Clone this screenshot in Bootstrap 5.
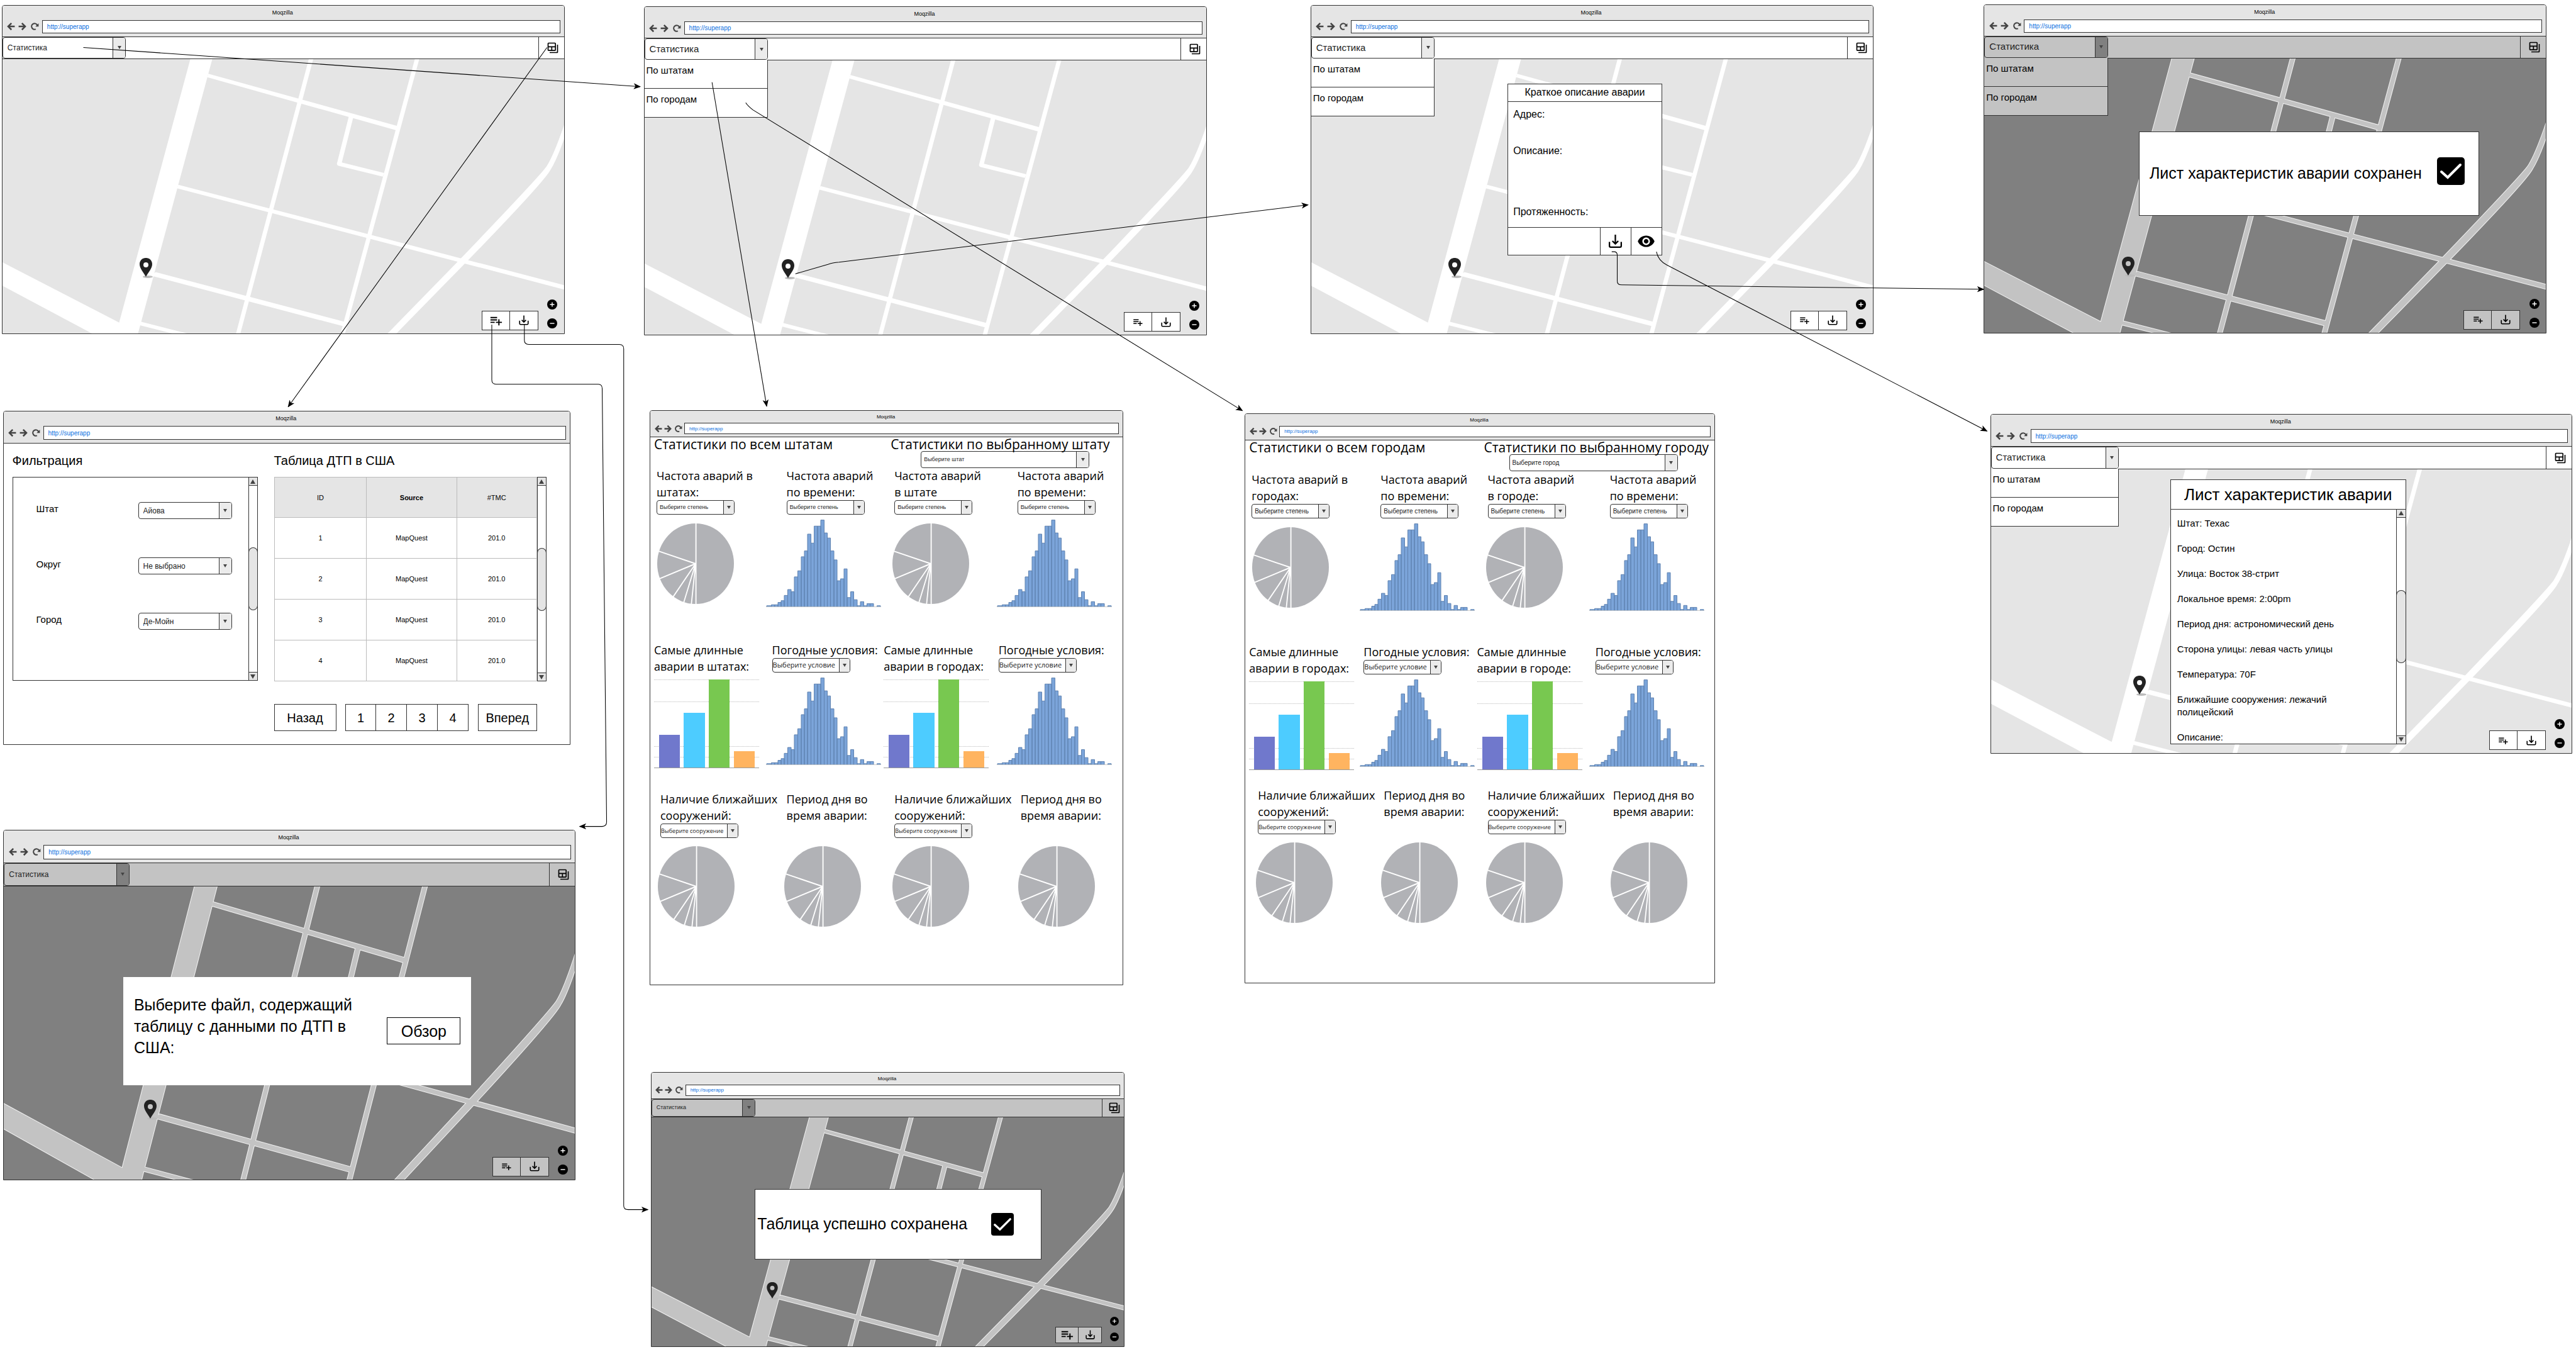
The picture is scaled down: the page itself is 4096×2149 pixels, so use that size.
<!DOCTYPE html>
<html lang="ru">
<head>
<meta charset="utf-8">
<meta name="viewport" content="width=device-width, initial-scale=1">
<title>Макеты: карта ДТП</title>
<link href="https://cdn.jsdelivr.net/npm/bootstrap@5.3.0/dist/css/bootstrap.min.css" rel="stylesheet">
<style>
  :root { --ink: #333; --pane: #e5e5e5; }
  body { font-family: "Liberation Sans", Arial, sans-serif; color: #000; background: #fff; overflow: hidden; }
  .board { position: relative; width: 100%; aspect-ratio: 4096 / 2149; }
  .flow-lines { position: absolute; inset: 0; width: 100%; height: 100%; pointer-events: none; z-index: 20; }
  .flow-lines path { fill: none; stroke: #000; stroke-width: 1.2; }
  .flow-lines .tip { fill: #000; stroke: none; }

  /* Browser windows on the board */
  .win { position: absolute; background: #fff; border: 1px solid var(--ink); border-radius: 4px 4px 0 0;
         --title-h: 23px; --bar-h: 21px; --nav-w: 19px; --nav-g: 14px; --pad-b: 5px; --title-f: 9px; --url-f: 10px;
         --tool-h: 35px; --tool-f: 15px; --hit: 16px; --ctl-w: 45px; --ctl-h: 31px; --ctl-i: 18px; --ctl-r: 41px; --ctl-g: 14px; }
  .win-tall { --bar-h: 22px; --tool-h: 36px; }
  .win-small { --title-h: 19px; --bar-h: 18px; --nav-w: 16px; --nav-g: 13px; --pad-b: 4px; --title-f: 8px; --url-f: 8px;
               --tool-h: 29px; --tool-f: 9px; --hit: 14px; --ctl-w: 37px; --ctl-h: 26px; --ctl-i: 17px; --ctl-r: 35px; --ctl-g: 11px; }
  .w-home   { left: .07%;  top: .37%;  width: 21.85%; --tool-f: 12px; }
  .w-menu   { left: 24.99%; top: .47%; width: 21.85%; }
  .w-brief  { left: 50.87%; top: .37%; width: 21.85%; }
  .w-saved  { left: 77.01%; top: .31%; width: 21.85%; }
  .w-filter { left: .11%;  top: 30.4%; width: 22.03%; }
  .w-states { left: 25.22%; top: 30.35%; width: 18.39%; --pf: 9px; --r0: 48px; --r1: 277px; --r2: 237px; --pb: 92px; --pick-in: 48px; }
  .w-cities { left: 48.32%; top: 30.57%; width: 18.25%; --pf: 10px; --r0: 49px; --r1: 274px; --r2: 228px; --pb: 95px; --pick-in: 40px; }
  .w-sheet  { left: 77.26%; top: 30.62%; width: 22.59%; --map: 925 / 452; }
  .w-upload { left: .13%;  top: 61.37%; width: 22.2%; --tool-f: 12px; --tool-h: 37px; --map: 909 / 467; --bar-h: 23px; }
  .w-done   { left: 25.26%; top: 79.27%; width: 18.4%; --map: 753 / 365; }

  .chrome { background: var(--pane); border-bottom: 1px solid var(--ink); border-radius: 3px 3px 0 0; padding: 0 6px var(--pad-b) 4px; }
  .win-title { font-size: var(--title-f); line-height: var(--title-h); text-align: center; }
  .nav-btn { border: 0; background: none; padding: 0; width: var(--nav-w); height: var(--bar-h); display: flex; align-items: center; justify-content: center; }
  .nav-btn svg { width: var(--nav-g); height: var(--nav-g); fill: #444; }
  .url-box { flex: 1; min-width: 0; height: var(--bar-h); border: 1px solid var(--ink); background: #fff; color: #0a6fe0; font-size: var(--url-f); padding: 0 7px; margin-left: 2px; border-radius: 0; }

  .tools { height: var(--tool-h); background: #fff; border-bottom: 1px solid var(--ink); position: relative; z-index: 2; }
  .tables-btn { width: var(--ctl-r); border: 0; border-left: 1px solid var(--ink); background: none; padding: 0 0 0 4px; display: flex; align-items: center; justify-content: center; }
  .tables-btn svg { width: 20px; height: 20px; }
  .pick { display: flex; border: 1px solid var(--ink); border-radius: 4px; background: #fff; overflow: hidden; }
  .pick select { appearance: none; border: 0; background: none; flex: 1; min-width: 0; padding: 0 0 0 7px; color: #222; font-size: inherit; }
  .pick-arrow { width: 20px; background: #ebebeb; border-left: 1px solid var(--ink); display: flex; align-items: center; justify-content: center; }
  .pick-arrow::before { content: ""; border: 3px solid transparent; border-top: 5px solid #444; border-bottom: 0; }
  .tools .pick { width: 22%; font-size: var(--tool-f); }
  .pick-menu { position: absolute; top: 100%; left: 0; width: 22%; font-size: 15px; }
  .pick-menu .list-group-item { height: 46px; padding: 7px 3px; line-height: 20px; color: #000; border: 1px solid var(--ink); border-top: 0; border-left: 0; background: #fff; }

  .city-map { position: relative; aspect-ratio: var(--map, 895 / 437); background: var(--pane); overflow: hidden; }
  .roads { position: absolute; inset: 0; width: 100%; height: 100%; fill: #fff; }
  .pin { position: absolute; left: 25.6%; top: 79.3%; width: 24px; height: 32px; transform: translate(-50%, -94%); }
  .win-small .pin { width: 21px; height: 28px; }
  .map-ctl { position: absolute; right: 0; bottom: 5px; display: flex; align-items: flex-end; }
  .ctl { width: var(--ctl-w); height: var(--ctl-h); border: 1px solid var(--ink); background: #fff; padding: 0; display: flex; align-items: center; justify-content: center; }
  .ctl + .ctl { border-left: 0; }
  .ctl svg { width: var(--ctl-i); height: var(--ctl-i); }
  .w-home .ctl:first-child svg, .w-done .ctl:first-child svg { width: 23px; height: 23px; }
  .zoomers { width: var(--ctl-r); display: flex; flex-direction: column; align-items: center; gap: var(--ctl-g); padding: 0 0 3px 4px; }
  .zoomers button { border: 0; background: none; padding: 0; line-height: 0; }
  .zoomers svg { width: var(--hit); height: var(--hit); display: block; }

  .dimmed .tools, .dimmed .tools .pick, .dimmed .pick-menu .list-group-item, .dimmed .ctl { background: #c3c3c3; }
  .dimmed .pick-arrow { background: #808080; }
  .dimmed .city-map { background: #808080; }
  .dimmed .roads { fill: #c3c3c3; }
  .dimmed .roads .edge { stroke: #f2f2f2; stroke-width: 2; }

  /* Boxes over the map */
  .sheet { position: absolute; background: #fff; border: 1px solid var(--ink); }
  .brief { left: 35%; top: 9%; width: 27.5%; font-size: 16px; }
  .brief-head { height: 28px; line-height: 26px; border-bottom: 1px solid var(--ink); text-align: center; }
  .brief-body { height: 200px; padding: 10px 8px 14px; line-height: 20px; border-bottom: 1px solid var(--ink); display: grid; grid-template-rows: 58px 97px 20px; }
  .brief-foot button { width: 49px; height: 43px; border: 0; border-left: 1px solid var(--ink); background: none; padding: 0; }
  .notice { left: 27.5%; top: 26.6%; width: 60.6%; height: 134px; padding: 0 22px 0 16px; font-size: 25px; white-space: nowrap; }
  .tick svg { width: 44px; height: 44px; display: block; }
  .done { left: 21.9%; top: 31.3%; height: 112px; padding: 0 43px 0 3px; }
  .done .tick svg { width: 36px; height: 36px; }
  .upload { left: 20.9%; top: 30.9%; width: 61%; height: 172px; padding: 0 17px; font-size: 25px; line-height: 34px; border: 0; }
  .upload-text { padding-bottom: 16px; }
  .upload button { width: 117px; height: 43px; border: 1px solid #000; background: #fff; padding: 0; font-size: 25px; line-height: 34px; }
  .traits { left: 30.9%; top: 3.5%; width: 40.6%; }
  .traits h2 { font-size: 26px; line-height: 46px; margin: 0; text-align: center; border-bottom: 1px solid var(--ink); }
  .traits-body { height: 372px; }
  .traits-list { padding: 12px 60px 0 10px; font-size: 15px; line-height: 20px; overflow: hidden; }
  .traits-list p { margin: 0 0 20px; }

  .sbar { width: 15px; flex: none; display: flex; flex-direction: column; border: 1px solid var(--ink); background: #fff; }
  .sbar b { height: 13px; background: var(--pane); display: flex; align-items: center; justify-content: center; }
  .sbar b::before { content: ""; border: 4px solid transparent; border-top: 0; border-bottom: 7px solid #444; }
  .sbar b:first-child { border-bottom: 1px solid var(--ink); }
  .sbar b:last-child { border-top: 1px solid var(--ink); }
  .sbar b:last-child::before { transform: rotate(180deg); }
  .sbar i { flex: 1; display: flex; align-items: center; }
  .sbar i::before { content: ""; width: 100%; height: 33%; background: var(--pane); border-radius: 8px; box-shadow: 0 0 0 1px var(--ink); }

  /* Filter window */
  .filter-page { display: grid; grid-template-columns: 390px 1fr; column-gap: 26px; padding: 14px 37px 21px 14px; }
  .filter-page h2 { font-size: 20px; line-height: 26px; margin: 0 0 13px; }
  .filter-box { height: 324px; border: 1px solid var(--ink); border-right: 0; }
  .filter-form { padding: 39px 26px 0 37px; display: flex; flex-direction: column; gap: 61px; font-size: 15px; line-height: 22px; }
  .filter-form .pick { width: 149px; height: 27px; font-size: 12px; }
  .filter-form label { line-height: 22px; }
  .data-grid { flex: 1; border-collapse: collapse; table-layout: fixed; font-size: 11px; text-align: center; }
  .data-grid th, .data-grid td { border: 1px solid #bbb; vertical-align: middle; padding: 0; height: 65px; }
  .data-grid th { background: var(--pane); font-weight: 400; height: 64px; }
  .data-grid th.sorted { font-weight: 700; }
  .pager { margin-top: 36px; padding-right: 15px; }
  .pager button { height: 43px; border: 1px solid var(--ink); background: #fff; font-size: 20px; padding: 0; color: #000; }
  .pager .side { width: 99px; }
  .pager .side:last-child { width: 94px; }
  .pager .num { width: 49px; }
  .pager .num + .num { border-left: 0; }

  /* Statistics windows */
  .stats { font-family: "Open Sans", "Noto Sans", sans-serif; display: grid; grid-template-columns: 184fr 185fr 183fr 201fr; grid-template-rows: var(--r0) var(--r1) var(--r2) auto; padding-bottom: var(--pb); }
  .stats > * { min-width: 0; }
  .stats h2 { font-size: 21px; line-height: 23px; margin: 0; white-space: nowrap; font-weight: 400; }
  .stats h3, .stats h3 label { font-size: 18px; line-height: 26px; margin: 0; white-space: nowrap; font-weight: 400; display: block; }
  .half { grid-column: span 2; padding-left: 6px; }
  .half + .half { padding-left: 14px; }
  .half .pick { width: 268px; height: 27px; margin: -1px 0 0 var(--pick-in); }
  .stats .pick { font-family: "Liberation Sans", Arial, sans-serif; font-size: var(--pf); }
  .cell .pick { width: 124px; height: 23px; }
  .cell .pick-arrow { width: 17px; }
  .stats .pick select { padding-left: 4px; }
  .stats .pick-wide { font-family: "Open Sans", "Noto Sans", sans-serif; font-size: 11px; }
  .stats .pick-wider { font-family: "Open Sans", "Noto Sans", sans-serif; font-size: 9px; }
  .stats .pick-wide select, .stats .pick-wider select { padding-left: 0; }
  .in-6 { padding-left: 6px; } .in-10 { padding-left: 10px; } .in-16 { padding-left: 16px; } .in-20 { padding-left: 20px; }
  .in-33 { padding-left: 33px; } .in-38 { padding-left: 38px; } .in-3 { padding-left: 3px; }
  .cell svg { display: block; }
  .cell .bell { width: 183px; height: 139px; margin-top: 8px; }
  .cell .cake { width: 122px; height: 128px; margin: 14px 0 0 1px; }
  .cell.in-20 .cake { margin-left: -3px; }
  .cell .bars { width: 167px; height: 141px; margin-top: 8px; }
  .cell .cake-end { margin: auto 0 0 -4px; }
  .cell.in-20 .cake-end { margin-top: auto; }
  .last-cell { display: flex; flex-direction: column; height: 216px; }
</style>
<script src="https://cdn.jsdelivr.net/npm/bootstrap@5.3.0/dist/js/bootstrap.bundle.min.js"></script>
</head>
<body>

<svg width="0" height="0" class="position-absolute" aria-hidden="true">
  <symbol id="g-back" viewBox="0 0 24 24"><path d="M12.5 1.5 15.6 4.6 10.3 9.800H23V14.200H10.300L15.600 19.400 12.500 22.500 2 12z"/></symbol>
  <symbol id="g-next" viewBox="0 0 24 24"><path d="M11.500 1.500 8.400 4.600 13.700 9.800H1V14.200H13.700L8.400 19.400 11.500 22.500 22 12z"/></symbol>
  <symbol id="g-reload" viewBox="0 0 24 24"><path d="M12 2a10 10 0 1 0 4 19.200l-1.500-3.400A6.300 6.300 0 1 1 17.500 9L14 12.500h9V3.500L20.200 6.300A10 10 0 0 0 12 2z"/></symbol>
  <symbol id="g-tables" viewBox="0 0 24 24"><path d="M20 6v14H6v2h14c1.100 0 2-.9 2-2V6h-2z"/><path d="M16 2H4c-1.100 0-2 .9-2 2v12c0 1.100.9 2 2 2h12c1.100 0 2-.9 2-2V4c0-1.100-.9-2-2-2zM9 16H4v-5h5v5zm7 0h-5v-5h5v5zm0-7H4V4h12v5z"/></symbol>
  <symbol id="g-listadd" viewBox="0 0 24 24"><path d="M14 10H3v2h11v-2zm0-4H3v2h11V6zm4 8v-4h-2v4h-4v2h4v4h2v-4h4v-2h-4zM3 16h7v-2H3v2z"/></symbol>
  <symbol id="g-save" viewBox="0 0 24 24"><path d="M3 13v6a2 2 0 0 0 2 2h14a2 2 0 0 0 2-2v-6M12 2v14M7.500 11.500 12 16l4.500-4.500" fill="none" stroke="#000" stroke-width="2.200"/></symbol>
  <symbol id="g-eye" viewBox="0 0 24 24"><path d="M12 4.500C7 4.500 2.730 7.610 1 12c1.730 4.390 6 7.500 11 7.500s9.270-3.110 11-7.500c-1.730-4.390-6-7.500-11-7.500zM12 17c-2.760 0-5-2.240-5-5s2.240-5 5-5 5 2.240 5 5-2.240 5-5 5zm0-8c-1.660 0-3 1.340-3 3s1.340 3 3 3 3-1.340 3-3-1.340-3-3-3z"/></symbol>
  <symbol id="g-plus" viewBox="0 0 18 18"><circle cx="9" cy="9" r="9"/><path d="M9 5v8M5 9h8" stroke="#fff" stroke-width="1.600"/></symbol>
  <symbol id="g-minus" viewBox="0 0 18 18"><circle cx="9" cy="9" r="9"/><path d="M5 9h8" stroke="#fff" stroke-width="1.600"/></symbol>
  <symbol id="g-check" viewBox="0 0 44 44"><rect width="44" height="44" rx="5"/><path d="M7 23 17 32 37 12" fill="none" stroke="#fff" stroke-width="4" stroke-linecap="round"/></symbol>
  <symbol id="g-pin" viewBox="0 0 24 32"><ellipse cx="15" cy="30" rx="8" ry="2" fill="#bbb"/><path d="M12 0C6 0 2 4.500 2 10c0 7 6.500 13 10 20 3.500-7 10-13 10-20C22 4.500 18 0 12 0zm0 7a4 4 0 1 1 0 8 4 4 0 0 1 0-8z" fill="#222"/></symbol>
  <g id="roads">
    <path vector-effect="non-scaling-stroke" d="M521 260H581L376 1530H255L0 1302V1195L325 1476z"/>
    <path vector-effect="non-scaling-stroke" d="M569 335 1089 576 1084 595 566 351z"/>
    <path vector-effect="non-scaling-stroke" d="M845 260H857L656 1530H644z"/>
    <path vector-effect="non-scaling-stroke" d="M1135 260H1147L942 1530H930z"/>
    <path vector-effect="non-scaling-stroke" d="M953 532 965 537 934 742 1050 790 1046 807 925 757Q919 753 921 745z"/>
    <path vector-effect="non-scaling-stroke" d="M487 844 1550 1308V1328L483 860z"/>
    <path vector-effect="non-scaling-stroke" d="M425 1245 945 1474 938 1493 412 1261z"/>
    <path vector-effect="non-scaling-stroke" d="M384 1472 520 1530H480L380 1488z"/>
    <path vector-effect="non-scaling-stroke" d="M1545 555Q1515 705 1494 760 1478 800 1255 1190L1057 1530H1081L1275 1198Q1488 830 1505 775 1522 730 1545 620z"/>
  </g>
  <symbol id="g-bell" viewBox="392 588 366 448" preserveAspectRatio="none">
    <path fill="#7ba4d9" stroke="#5f82b0" stroke-width="1" vector-effect="non-scaling-stroke" d="M394 1034V1029H409V1034M409 1034V1024H419.500V1034M419.500 1034V1024H430V1034M430 1034V1012H440V1034M440 1034V1003H450V1034M450 1034V976H461V1034M461 1034V946H472V1034M472 1034V957H482V1034M482 1034V881H493V1034M493 1034V850H504V1034M504 1034V778H514V1034M514 1034V748H524V1034M524 1034V662H535V1034M535 1034V708H545V1034M545 1034V621H556V1034M556 1034V621H566V1034M566 1034V590H577V1034M577 1034V656H587V1034M587 1034V682H597V1034M597 1034V748H608V1034M608 1034V794H618V1034M618 1034V901H629V1034M629 1034V891H640V1034M640 1034V840H650V1034M650 1034V987H661V1034M661 1034V957H671V1034M671 1034V998H682V1034M682 1034V1029H692V1034M692 1034V1008H703V1034M703 1034V1029H713V1034M713 1034V1018H723V1034M723 1034V1018H734V1034M745 1034V1029H756V1034"/>
    <path d="M392 1034H758" stroke="#bbb" stroke-width="3"/>
  </symbol>
  <symbol id="g-cake" viewBox="-100 -100 200 200" preserveAspectRatio="none">
    <circle r="100" fill="#b1b2b6"/>
    <path d="M1-100V100M0 0-96-31M0 0-96 38M0 0-59 83M0 0-31 97M0 0-11 101" stroke="#fff" stroke-width="3"/>
  </symbol>
  <symbol id="g-bars" viewBox="0 0 167 141">
    <path d="M0 .5H167M0 35.500H167M0 106.500H167M0 123.500H167" stroke="#bbb" stroke-dasharray="1 1"/>
    <path fill="#7078cc" d="M8 88h33v53H8z"/><path fill="#4dccff" d="M47 53h34v88H47z"/>
    <path fill="#78c850" d="M87 0h33v141H87z"/><path fill="#ffb460" d="M127 114h33v27H127z"/>
    <path d="M0 140.500H167" stroke="#999"/>
  </symbol>
</svg>

<main class="board">

  <!-- Home -->
  <section class="win w-home">
    <header class="chrome">
      <div class="win-title">Moqzilla</div>
      <div class="d-flex"><button class="nav-btn" aria-label="Назад"><svg><use href="#g-back"/></svg></button><button class="nav-btn" aria-label="Вперед"><svg><use href="#g-next"/></svg></button><button class="nav-btn" aria-label="Обновить"><svg><use href="#g-reload"/></svg></button><input class="url-box" type="text" value="http://superapp" aria-label="Адрес"></div>
    </header>
    <div class="tools d-flex justify-content-between">
      <div class="pick"><select aria-label="Статистика"><option>Статистика</option></select><span class="pick-arrow"></span></div>
      <button class="tables-btn" aria-label="Таблица"><svg><use href="#g-tables"/></svg></button>
    </div>
    <div class="city-map">
      <svg class="roads" viewBox="6 268 1536 1258" preserveAspectRatio="none"><use href="#roads"/></svg>
      <svg class="pin"><use href="#g-pin"/></svg>
      <div class="map-ctl"><button class="ctl" aria-label="Добавить"><svg><use href="#g-listadd"/></svg></button><button class="ctl" aria-label="Сохранить"><svg><use href="#g-save"/></svg></button>
        <div class="zoomers"><button aria-label="Ближе"><svg><use href="#g-plus"/></svg></button><button aria-label="Дальше"><svg><use href="#g-minus"/></svg></button></div></div>
    </div>
  </section>

  <!-- Open menu -->
  <section class="win w-menu">
    <header class="chrome">
      <div class="win-title">Moqzilla</div>
      <div class="d-flex"><button class="nav-btn" aria-label="Назад"><svg><use href="#g-back"/></svg></button><button class="nav-btn" aria-label="Вперед"><svg><use href="#g-next"/></svg></button><button class="nav-btn" aria-label="Обновить"><svg><use href="#g-reload"/></svg></button><input class="url-box" type="text" value="http://superapp" aria-label="Адрес"></div>
    </header>
    <div class="tools d-flex justify-content-between">
      <div class="pick"><select aria-label="Статистика"><option>Статистика</option></select><span class="pick-arrow"></span></div>
      <button class="tables-btn" aria-label="Таблица"><svg><use href="#g-tables"/></svg></button>
      <div class="pick-menu list-group rounded-0"><a class="list-group-item" href="#states">По штатам</a><a class="list-group-item" href="#cities">По городам</a></div>
    </div>
    <div class="city-map">
      <svg class="roads" viewBox="6 268 1536 1258" preserveAspectRatio="none"><use href="#roads"/></svg>
      <svg class="pin"><use href="#g-pin"/></svg>
      <div class="map-ctl"><button class="ctl" aria-label="Добавить"><svg><use href="#g-listadd"/></svg></button><button class="ctl" aria-label="Сохранить"><svg><use href="#g-save"/></svg></button>
        <div class="zoomers"><button aria-label="Ближе"><svg><use href="#g-plus"/></svg></button><button aria-label="Дальше"><svg><use href="#g-minus"/></svg></button></div></div>
    </div>
  </section>

  <!-- Short description -->
  <section class="win w-brief">
    <header class="chrome">
      <div class="win-title">Moqzilla</div>
      <div class="d-flex"><button class="nav-btn" aria-label="Назад"><svg><use href="#g-back"/></svg></button><button class="nav-btn" aria-label="Вперед"><svg><use href="#g-next"/></svg></button><button class="nav-btn" aria-label="Обновить"><svg><use href="#g-reload"/></svg></button><input class="url-box" type="text" value="http://superapp" aria-label="Адрес"></div>
    </header>
    <div class="tools d-flex justify-content-between">
      <div class="pick"><select aria-label="Статистика"><option>Статистика</option></select><span class="pick-arrow"></span></div>
      <button class="tables-btn" aria-label="Таблица"><svg><use href="#g-tables"/></svg></button>
      <div class="pick-menu list-group rounded-0"><a class="list-group-item" href="#states">По штатам</a><a class="list-group-item" href="#cities">По городам</a></div>
    </div>
    <div class="city-map">
      <svg class="roads" viewBox="6 268 1536 1258" preserveAspectRatio="none"><use href="#roads"/></svg>
      <svg class="pin"><use href="#g-pin"/></svg>
      <div class="sheet brief">
        <div class="brief-head">Краткое описание аварии</div>
        <div class="brief-body"><span>Адрес:</span><span>Описание:</span><span>Протяженность:</span></div>
        <div class="brief-foot d-flex justify-content-end"><button aria-label="Сохранить"><svg width="25" height="25"><use href="#g-save"/></svg></button><button aria-label="Просмотр"><svg width="29" height="29"><use href="#g-eye"/></svg></button></div>
      </div>
      <div class="map-ctl"><button class="ctl" aria-label="Добавить"><svg><use href="#g-listadd"/></svg></button><button class="ctl" aria-label="Сохранить"><svg><use href="#g-save"/></svg></button>
        <div class="zoomers"><button aria-label="Ближе"><svg><use href="#g-plus"/></svg></button><button aria-label="Дальше"><svg><use href="#g-minus"/></svg></button></div></div>
    </div>
  </section>

  <!-- Sheet saved -->
  <section class="win w-saved dimmed">
    <header class="chrome">
      <div class="win-title">Moqzilla</div>
      <div class="d-flex"><button class="nav-btn" aria-label="Назад"><svg><use href="#g-back"/></svg></button><button class="nav-btn" aria-label="Вперед"><svg><use href="#g-next"/></svg></button><button class="nav-btn" aria-label="Обновить"><svg><use href="#g-reload"/></svg></button><input class="url-box" type="text" value="http://superapp" aria-label="Адрес"></div>
    </header>
    <div class="tools d-flex justify-content-between">
      <div class="pick"><select aria-label="Статистика"><option>Статистика</option></select><span class="pick-arrow"></span></div>
      <button class="tables-btn" aria-label="Таблица"><svg><use href="#g-tables"/></svg></button>
      <div class="pick-menu list-group rounded-0"><a class="list-group-item" href="#states">По штатам</a><a class="list-group-item" href="#cities">По городам</a></div>
    </div>
    <div class="city-map">
      <svg class="roads" viewBox="6 268 1536 1258" preserveAspectRatio="none"><use class="edge" href="#roads"/><use href="#roads"/></svg>
      <svg class="pin"><use href="#g-pin"/></svg>
      <div class="sheet notice d-flex align-items-center justify-content-between"><span>Лист характеристик аварии сохранен</span><span class="tick pb-2"><svg><use href="#g-check"/></svg></span></div>
      <div class="map-ctl"><button class="ctl" aria-label="Добавить"><svg><use href="#g-listadd"/></svg></button><button class="ctl" aria-label="Сохранить"><svg><use href="#g-save"/></svg></button>
        <div class="zoomers"><button aria-label="Ближе"><svg><use href="#g-plus"/></svg></button><button aria-label="Дальше"><svg><use href="#g-minus"/></svg></button></div></div>
    </div>
  </section>

  <!-- Filter and table -->
  <section class="win win-tall w-filter">
    <header class="chrome">
      <div class="win-title">Moqzilla</div>
      <div class="d-flex"><button class="nav-btn" aria-label="Назад"><svg><use href="#g-back"/></svg></button><button class="nav-btn" aria-label="Вперед"><svg><use href="#g-next"/></svg></button><button class="nav-btn" aria-label="Обновить"><svg><use href="#g-reload"/></svg></button><input class="url-box" type="text" value="http://superapp" aria-label="Адрес"></div>
    </header>
    <div class="filter-page">
      <div>
        <h2>Фильтрация</h2>
        <div class="filter-box d-flex">
          <form class="filter-form flex-fill">
            <div class="d-flex justify-content-between"><label for="f-state">Штат</label><div class="pick"><select id="f-state"><option>Айова</option></select><span class="pick-arrow"></span></div></div>
            <div class="d-flex justify-content-between"><label for="f-county">Округ</label><div class="pick"><select id="f-county"><option>Не выбрано</option></select><span class="pick-arrow"></span></div></div>
            <div class="d-flex justify-content-between"><label for="f-city">Город</label><div class="pick"><select id="f-city"><option>Де-Мойн</option></select><span class="pick-arrow"></span></div></div>
          </form>
          <div class="sbar border-top-0 border-bottom-0"><b></b><i></i><b></b></div>
        </div>
      </div>
      <div>
        <h2>Таблица ДТП в США</h2>
        <div class="d-flex">
          <table class="data-grid">
            <colgroup><col style="width:35.2%"><col style="width:34.3%"><col style="width:30.5%"></colgroup>
            <thead><tr><th>ID</th><th class="sorted">Source</th><th>#TMC</th></tr></thead>
            <tbody>
              <tr><td>1</td><td>MapQuest</td><td>201.0</td></tr>
              <tr><td>2</td><td>MapQuest</td><td>201.0</td></tr>
              <tr><td>3</td><td>MapQuest</td><td>201.0</td></tr>
              <tr><td>4</td><td>MapQuest</td><td>201.0</td></tr>
            </tbody>
          </table>
          <div class="sbar"><b></b><i></i><b></b></div>
        </div>
        <nav class="pager d-flex justify-content-between"><button class="side">Назад</button><div class="d-flex"><button class="num">1</button><button class="num">2</button><button class="num">3</button><button class="num">4</button></div><button class="side">Вперед</button></nav>
      </div>
    </div>
  </section>

  <!-- Statistics by state -->
  <section class="win win-small w-states" id="states">
    <header class="chrome">
      <div class="win-title">Moqzilla</div>
      <div class="d-flex"><button class="nav-btn" aria-label="Назад"><svg><use href="#g-back"/></svg></button><button class="nav-btn" aria-label="Вперед"><svg><use href="#g-next"/></svg></button><button class="nav-btn" aria-label="Обновить"><svg><use href="#g-reload"/></svg></button><input class="url-box" type="text" value="http://superapp" aria-label="Адрес"></div>
    </header>
    <div class="stats">
      <div class="half"><h2>Статистики по всем штатам</h2></div>
      <div class="half"><h2><label for="s0">Статистики по выбранному штату</label></h2><div class="pick"><select id="s0"><option>Выберите штат</option></select><span class="pick-arrow"></span></div></div>

      <div class="cell in-10"><h3><label for="s1">Частота аварий в<br>штатах:</label></h3><div class="pick"><select id="s1"><option>Выберите степень</option></select><span class="pick-arrow"></span></div><svg class="cake"><use href="#g-cake"/></svg></div>
      <div class="cell"><div class="in-33"><h3><label for="s2">Частота аварий<br>по времени:</label></h3><div class="pick"><select id="s2"><option>Выберите степень</option></select><span class="pick-arrow"></span></div></div><svg class="bell"><use href="#g-bell"/></svg></div>
      <div class="cell in-20"><h3><label for="s3">Частота аварий<br>в штате</label></h3><div class="pick"><select id="s3"><option>Выберите степень</option></select><span class="pick-arrow"></span></div><svg class="cake"><use href="#g-cake"/></svg></div>
      <div class="cell"><div class="in-33"><h3><label for="s4">Частота аварий<br>по времени:</label></h3><div class="pick"><select id="s4"><option>Выберите степень</option></select><span class="pick-arrow"></span></div></div><svg class="bell"><use href="#g-bell"/></svg></div>

      <div class="cell in-6"><h3>Самые длинные<br>аварии в штатах:</h3><svg class="bars"><use href="#g-bars"/></svg></div>
      <div class="cell"><div class="in-10"><h3><label for="s5">Погодные условия:</label></h3><div class="pick pick-wide"><select id="s5"><option>Выберите условие</option></select><span class="pick-arrow"></span></div></div><svg class="bell"><use href="#g-bell"/></svg></div>
      <div class="cell in-3"><h3>Самые длинные<br>аварии в городах:</h3><svg class="bars"><use href="#g-bars"/></svg></div>
      <div class="cell"><div class="in-3"><h3><label for="s6">Погодные условия:</label></h3><div class="pick pick-wide"><select id="s6"><option>Выберите условие</option></select><span class="pick-arrow"></span></div></div><svg class="bell"><use href="#g-bell"/></svg></div>

      <div class="cell last-cell in-16"><h3><label for="s7">Наличие ближайших<br>сооружений:</label></h3><div class="pick pick-wider"><select id="s7"><option>Выберите сооружение</option></select><span class="pick-arrow"></span></div><svg class="cake cake-end"><use href="#g-cake"/></svg></div>
      <div class="cell last-cell in-33"><h3>Период дня во<br>время аварии:</h3><svg class="cake cake-end"><use href="#g-cake"/></svg></div>
      <div class="cell last-cell in-20"><h3><label for="s8">Наличие ближайших<br>сооружений:</label></h3><div class="pick pick-wider"><select id="s8"><option>Выберите сооружение</option></select><span class="pick-arrow"></span></div><svg class="cake cake-end"><use href="#g-cake"/></svg></div>
      <div class="cell last-cell in-38"><h3>Период дня во<br>время аварии:</h3><svg class="cake cake-end"><use href="#g-cake"/></svg></div>
    </div>
  </section>

  <!-- Statistics by city -->
  <section class="win win-small w-cities" id="cities">
    <header class="chrome">
      <div class="win-title">Moqzilla</div>
      <div class="d-flex"><button class="nav-btn" aria-label="Назад"><svg><use href="#g-back"/></svg></button><button class="nav-btn" aria-label="Вперед"><svg><use href="#g-next"/></svg></button><button class="nav-btn" aria-label="Обновить"><svg><use href="#g-reload"/></svg></button><input class="url-box" type="text" value="http://superapp" aria-label="Адрес"></div>
    </header>
    <div class="stats">
      <div class="half"><h2>Статистики о всем городам</h2></div>
      <div class="half"><h2><label for="c0">Статистики по выбранному городу</label></h2><div class="pick"><select id="c0"><option>Выберите город</option></select><span class="pick-arrow"></span></div></div>

      <div class="cell in-10"><h3><label for="c1">Частота аварий в<br>городах:</label></h3><div class="pick"><select id="c1"><option>Выберите степень</option></select><span class="pick-arrow"></span></div><svg class="cake"><use href="#g-cake"/></svg></div>
      <div class="cell"><div class="in-33"><h3><label for="c2">Частота аварий<br>по времени:</label></h3><div class="pick"><select id="c2"><option>Выберите степень</option></select><span class="pick-arrow"></span></div></div><svg class="bell"><use href="#g-bell"/></svg></div>
      <div class="cell in-20"><h3><label for="c3">Частота аварий<br>в городе:</label></h3><div class="pick"><select id="c3"><option>Выберите степень</option></select><span class="pick-arrow"></span></div><svg class="cake"><use href="#g-cake"/></svg></div>
      <div class="cell"><div class="in-33"><h3><label for="c4">Частота аварий<br>по времени:</label></h3><div class="pick"><select id="c4"><option>Выберите степень</option></select><span class="pick-arrow"></span></div></div><svg class="bell"><use href="#g-bell"/></svg></div>

      <div class="cell in-6"><h3>Самые длинные<br>аварии в городах:</h3><svg class="bars"><use href="#g-bars"/></svg></div>
      <div class="cell"><div class="in-6"><h3><label for="c5">Погодные условия:</label></h3><div class="pick pick-wide"><select id="c5"><option>Выберите условие</option></select><span class="pick-arrow"></span></div></div><svg class="bell"><use href="#g-bell"/></svg></div>
      <div class="cell in-3"><h3>Самые длинные<br>аварии в городе:</h3><svg class="bars"><use href="#g-bars"/></svg></div>
      <div class="cell"><div class="in-10"><h3><label for="c6">Погодные условия:</label></h3><div class="pick pick-wide"><select id="c6"><option>Выберите условие</option></select><span class="pick-arrow"></span></div></div><svg class="bell"><use href="#g-bell"/></svg></div>

      <div class="cell last-cell in-20"><h3><label for="c7">Наличие ближайших<br>сооружений:</label></h3><div class="pick pick-wider"><select id="c7"><option>Выберите сооружение</option></select><span class="pick-arrow"></span></div><svg class="cake cake-end"><use href="#g-cake"/></svg></div>
      <div class="cell last-cell in-38"><h3>Период дня во<br>время аварии:</h3><svg class="cake cake-end"><use href="#g-cake"/></svg></div>
      <div class="cell last-cell in-20"><h3><label for="c8">Наличие ближайших<br>сооружений:</label></h3><div class="pick pick-wider"><select id="c8"><option>Выберите сооружение</option></select><span class="pick-arrow"></span></div><svg class="cake cake-end"><use href="#g-cake"/></svg></div>
      <div class="cell last-cell in-38"><h3>Период дня во<br>время аварии:</h3><svg class="cake cake-end"><use href="#g-cake"/></svg></div>
    </div>
  </section>

  <!-- Sheet of traits -->
  <section class="win win-tall w-sheet">
    <header class="chrome">
      <div class="win-title">Moqzilla</div>
      <div class="d-flex"><button class="nav-btn" aria-label="Назад"><svg><use href="#g-back"/></svg></button><button class="nav-btn" aria-label="Вперед"><svg><use href="#g-next"/></svg></button><button class="nav-btn" aria-label="Обновить"><svg><use href="#g-reload"/></svg></button><input class="url-box" type="text" value="http://superapp" aria-label="Адрес"></div>
    </header>
    <div class="tools d-flex justify-content-between">
      <div class="pick"><select aria-label="Статистика"><option>Статистика</option></select><span class="pick-arrow"></span></div>
      <button class="tables-btn" aria-label="Таблица"><svg><use href="#g-tables"/></svg></button>
      <div class="pick-menu list-group rounded-0"><a class="list-group-item" href="#states">По штатам</a><a class="list-group-item" href="#cities">По городам</a></div>
    </div>
    <div class="city-map">
      <svg class="roads" viewBox="6 268 1536 1258" preserveAspectRatio="none"><use href="#roads"/></svg>
      <svg class="pin"><use href="#g-pin"/></svg>
      <div class="sheet traits">
        <h2>Лист характеристик аварии</h2>
        <div class="traits-body d-flex">
          <div class="traits-list flex-fill">
            <p>Штат: Техас</p><p>Город: Остин</p><p>Улица: Восток 38-стрит</p><p>Локальное время: 2:00pm</p><p>Период дня: астрономический день</p><p>Сторона улицы: левая часть улицы</p><p>Температура: 70F</p><p>Ближайшие сооружения: лежачий полицейский</p><p>Описание:</p>
          </div>
          <div class="sbar border-top-0 border-bottom-0 border-end-0"><b></b><i></i><b></b></div>
        </div>
      </div>
      <div class="map-ctl"><button class="ctl" aria-label="Добавить"><svg><use href="#g-listadd"/></svg></button><button class="ctl" aria-label="Сохранить"><svg><use href="#g-save"/></svg></button>
        <div class="zoomers"><button aria-label="Ближе"><svg><use href="#g-plus"/></svg></button><button aria-label="Дальше"><svg><use href="#g-minus"/></svg></button></div></div>
    </div>
  </section>

  <!-- File upload -->
  <section class="win w-upload dimmed">
    <header class="chrome">
      <div class="win-title">Moqzilla</div>
      <div class="d-flex"><button class="nav-btn" aria-label="Назад"><svg><use href="#g-back"/></svg></button><button class="nav-btn" aria-label="Вперед"><svg><use href="#g-next"/></svg></button><button class="nav-btn" aria-label="Обновить"><svg><use href="#g-reload"/></svg></button><input class="url-box" type="text" value="http://superapp" aria-label="Адрес"></div>
    </header>
    <div class="tools d-flex justify-content-between">
      <div class="pick"><select aria-label="Статистика"><option>Статистика</option></select><span class="pick-arrow"></span></div>
      <button class="tables-btn" aria-label="Таблица"><svg><use href="#g-tables"/></svg></button>
    </div>
    <div class="city-map">
      <svg class="roads" viewBox="6 268 1536 1258" preserveAspectRatio="none"><use class="edge" href="#roads"/><use href="#roads"/></svg>
      <svg class="pin"><use href="#g-pin"/></svg>
      <div class="sheet upload d-flex align-items-center justify-content-between"><span class="upload-text">Выберите файл, содержащий<br>таблицу с данными по ДТП в<br>США:</span><button>Обзор</button></div>
      <div class="map-ctl"><button class="ctl" aria-label="Добавить"><svg><use href="#g-listadd"/></svg></button><button class="ctl" aria-label="Сохранить"><svg><use href="#g-save"/></svg></button>
        <div class="zoomers"><button aria-label="Ближе"><svg><use href="#g-plus"/></svg></button><button aria-label="Дальше"><svg><use href="#g-minus"/></svg></button></div></div>
    </div>
  </section>

  <!-- Table saved -->
  <section class="win win-small w-done dimmed">
    <header class="chrome">
      <div class="win-title">Moqzilla</div>
      <div class="d-flex"><button class="nav-btn" aria-label="Назад"><svg><use href="#g-back"/></svg></button><button class="nav-btn" aria-label="Вперед"><svg><use href="#g-next"/></svg></button><button class="nav-btn" aria-label="Обновить"><svg><use href="#g-reload"/></svg></button><input class="url-box" type="text" value="http://superapp" aria-label="Адрес"></div>
    </header>
    <div class="tools d-flex justify-content-between">
      <div class="pick"><select aria-label="Статистика"><option>Статистика</option></select><span class="pick-arrow"></span></div>
      <button class="tables-btn" aria-label="Таблица"><svg><use href="#g-tables"/></svg></button>
    </div>
    <div class="city-map">
      <svg class="roads" viewBox="6 268 1536 1258" preserveAspectRatio="none"><use class="edge" href="#roads"/><use href="#roads"/></svg>
      <svg class="pin"><use href="#g-pin"/></svg>
      <div class="sheet notice done d-flex align-items-center justify-content-between"><span>Таблица успешно сохранена</span><span class="tick"><svg><use href="#g-check"/></svg></span></div>
      <div class="map-ctl"><button class="ctl" aria-label="Добавить"><svg><use href="#g-listadd"/></svg></button><button class="ctl" aria-label="Сохранить"><svg><use href="#g-save"/></svg></button>
        <div class="zoomers"><button aria-label="Ближе"><svg><use href="#g-plus"/></svg></button><button aria-label="Дальше"><svg><use href="#g-minus"/></svg></button></div></div>
    </div>
  </section>

  <!-- Transitions between the windows -->
  <svg class="flow-lines" viewBox="0 0 4667 2449" preserveAspectRatio="none" aria-hidden="true">
    <defs><marker id="tip" viewBox="0 0 12 12" refX="11" refY="6" markerWidth="13" markerHeight="13" markerUnits="userSpaceOnUse" orient="auto"><path class="tip" d="M0 1 12 6 0 11 3 6z"/></marker></defs>
    <g>
      <path marker-end="url(#tip)" d="M151 86 1160 157"/>
      <path marker-end="url(#tip)" d="M991 86 522 737"/>
      <path marker-end="url(#tip)" d="M891 588V688Q891 696 899 696H1084Q1091 696 1091 704L1099 1489Q1099 1497 1091 1497H1050"/>
      <path marker-end="url(#tip)" d="M950 587V616Q950 624 958 624H1122Q1130 624 1130 632V2184Q1130 2191 1138 2191H1174"/>
      <path marker-end="url(#tip)" d="M1290 149 1389 736"/>
      <path marker-end="url(#tip)" d="M1351 186Q1355 192 1364 199L2251 744"/>
      <path marker-end="url(#tip)" d="M1441 496 1500 479Q1508 476 1520 475L2370 371"/>
      <path marker-end="url(#tip)" d="M2920 456H2924Q2930 456 2930 462V509Q2930 516 2938 516L3594 524"/>
      <path marker-end="url(#tip)" d="M3001 456Q3004 472 3020 480L3600 781"/>
    </g>
  </svg>
</main>
</body>
</html>
